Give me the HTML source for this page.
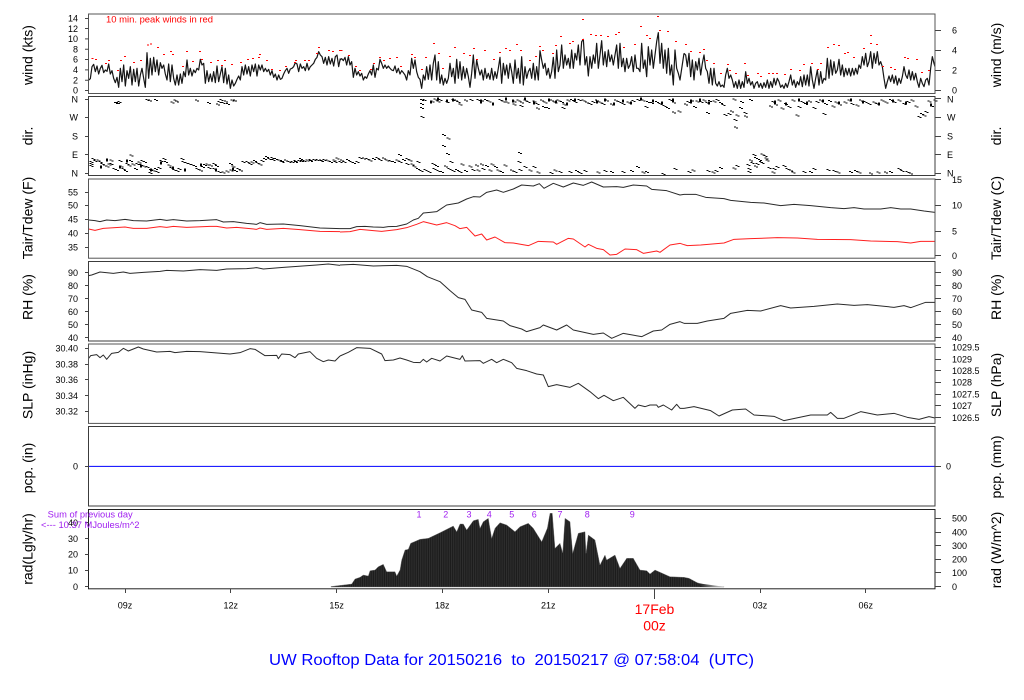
<!DOCTYPE html>
<html>
<head>
<meta charset="utf-8">
<title>UW Rooftop Data</title>
<style>
html,body{margin:0;padding:0;background:#fff;width:1024px;height:700px;overflow:hidden}
svg{display:block}
text{font-family:"Liberation Sans",Arial,sans-serif;white-space:pre}
.t{font-size:9px;fill:#000}
.e{text-anchor:end}
.m{text-anchor:middle}
.a{font-size:14px;fill:#000;text-anchor:middle}
.p{font-size:9px;fill:#a020f0}
</style>
</head>
<body>
<svg xmlns="http://www.w3.org/2000/svg" width="1024" height="700" viewBox="0 0 1024 700">
<defs>
<pattern id="st" width="2.2" height="10" patternUnits="userSpaceOnUse"><rect width="2.2" height="10" fill="#1c1c1c"/><rect width="1" height="10" fill="#303030"/></pattern>
<linearGradient id="fade" x1="0" x2="1" y1="0" y2="0"><stop offset="0" stop-color="#222"/><stop offset="1" stop-color="#ddd"/></linearGradient>
</defs>
<rect width="1024" height="700" fill="#fff"/>

<!-- radiation -->
<path fill="url(#st)" stroke="#777" stroke-width=".4" d="M331 586.5L351.7 584 355 579 360 577.3 363.3 575 368.3 576 370 570.7 375 570 378.3 566.7 383.3 564.3 386.7 571.7 395 571.7 396.7 576 400 570 401.7 560 405 550 408.3 549.3 410.7 543.3 420 539.3 428.3 538.3 440 532.7 453.3 526 456.7 531.7 460 524 463.3 524 466.7 530 473.3 520.7 478.3 519.3 480 528.3 483.3 521.7 488.3 518.3 491.7 538.3 495 528.3 500 522.7 506.7 525 515 531.7 520 526.7 528.3 523.3 533.3 528.3 541.7 541.7 547.3 528.3 550 513.3 552.3 513.3 555 548.3 560 543.3 562.7 552.7 565 518.3 570 521.7 572.7 553.3 575 545 578.3 533.3 585 531.7 586 553.3 588.3 535 595 540 600 565 605 555 606.7 560 615 555 620 568.3 626.7 558.3 633.3 558.3 640 570 646.7 570.7 650 574 655 570 670 576.7 684 577.3 689 578.3 697.3 582.7 707.3 585.7 724 586.7 V587 H331Z"/>
<path fill="url(#fade)" d="M700 583.5L724 586.7V587H700Z"/>

<!-- blue precip -->
<path d="M89 466.4H935" stroke="#0000ff" stroke-width="1" fill="none"/>

<!-- wind -->
<g fill="none" stroke="#151515" stroke-width="3.6" stroke-linejoin="round">
<polyline transform="scale(.33333)" points="266 240 271 236 276 200 281 193 286 215 291 198 296 222 301 205 306 196 311 218 316 210 321 214 326 192 331 222 336 212 341 235 346 248 351 232 356 262 361 205 366 245 371 195 376 258 381 212 386 235 391 200 396 255 401 208 406 245 411 205 416 258 421 225 426 205 431 235 436 262 441 158 446 235 451 175 456 225 461 172 466 215 471 180 476 225 481 188 486 205 491 195 496 222 501 240 506 192 511 245 516 195 521 235 526 255 531 225 536 255 541 222 546 250 551 215 556 230 561 180 566 225 571 205 576 228 581 210 586 218 591 205 596 210 601 178 606 195 611 190 616 250 621 212 626 245 631 222 636 245 641 215 646 248 651 198 656 245 661 222 666 200 671 248 676 205 681 252 686 225 691 265 696 240 701 258 706 250 711 238 716 228 721 240 726 200 731 225 736 195 741 222 746 200 751 228 756 195 761 215 766 192 771 228 776 195 781 210 786 195 791 215 796 205 801 215 806 208 811 225 816 212 821 232 826 222 831 240 836 225 841 238 846 235 851 222 856 212 861 205 866 220 871 207 876 205 881 200 886 188 891 192 896 215 901 192 906 205 911 200 916 212 921 190 926 210 931 200 936 195 941 190 946 178 951 172 956 155 961 165 966 170 971 190 976 172 981 195 986 170 991 192 996 175 1001 198 1006 170 1011 165 1016 200 1021 175"/>
<polyline transform="translate(340 0) scale(.33333)" points="0 180 5 176 10 182 15 172 20 195 25 170 30 195 35 185 40 232 45 205 50 225 55 215 60 228 65 220 70 240 75 230 80 235 85 222 90 212 95 225 100 195 105 232 110 205 115 210 120 178 125 190 130 205 135 195 140 205 145 198 150 205 155 210 160 212 165 198 170 218 175 205 180 222 185 212 190 218 195 225 200 240 205 212 210 225 215 175 220 205 225 180 230 215 235 232 240 238 245 265 250 225 255 240 260 200 265 238 270 195 275 240 280 190 285 165 290 240 295 185 300 250 305 225 310 255 315 235 320 250 325 235 330 190 335 230 340 205 345 250 350 178 355 235 360 185 365 240 370 200 375 235 380 205 385 230 390 262 395 220 400 165 405 235 410 180 415 205 420 225 425 210 430 240 435 205 440 235 445 220 450 238 455 205 460 240 465 215 470 235 475 205 480 172 485 250 490 190 495 225 500 195 505 235 510 190 515 215 520 250 525 180 530 235 535 205 540 250 545 170 550 255 555 200 560 235 565 215 570 205 575 235 580 190 585 240 590 200 595 240 600 152 605 180 610 205 615 190 620 225 625 205 630 235 635 215 640 172 645 235 650 150 655 215 660 195 665 135 670 205 675 165 680 195 685 175 690 205 695 150 700 205 705 160 710 180 715 135 720 195 725 125 730 118 735 195 740 170 745 228 750 170 755 205 760 165 765 190 770 130 775 205 780 165 785 122 790 195 795 155 800 200 805 150 810 185 815 165 820 195 825 165 830 135 835 205 840 130 845 200 850 175 855 215 860 175 865 205 870 195 875 170 880 215 885 165 890 205 895 205 900 215 905 130 910 205 915 180 920 230 925 140 930 195 935 150 940 205 945 165 950 125 955 98 960 190 965 130 970 205 975 150 980 220 985 145 990 225 995 195 1000 255 1005 150 1010 205 1015 220 1020 240 1032 160"/>
<polyline transform="translate(684 0) scale(.33333)" points="0 160 5 165 10 200 15 160 20 230 25 180 30 240 35 185 40 210 45 175 50 225 55 190 60 165 65 205 70 215 75 250 80 205 85 255 90 205 95 250 100 258 105 245 110 260 115 255 120 262 125 225 130 205 135 235 140 225 145 240 150 262 155 245 160 265 165 240 170 265 175 245 180 262 185 215 190 250 195 235 200 255 205 245 210 265 215 250 220 245 225 262 230 250 235 265 240 248 245 262 250 240 255 265 260 245 265 262 270 235 275 255 280 235 285 245 290 262 295 255 300 265 305 250 310 262 315 245 320 225 325 255 330 240 335 262 340 245 345 255 350 230 355 260 360 225 365 255 370 225 375 258 380 200 385 240 390 265 395 235 400 210 405 255 410 215 415 250 420 235 425 240 430 175 435 235 440 180 445 225 450 185 455 220 460 210 465 178 470 225 475 195 480 230 485 205 490 225 495 205 500 228 505 205 510 225 515 205 520 222 525 195 530 205 535 170 540 195 545 160 550 200 555 185 560 155 565 205 570 160 575 190 580 155 585 195 590 185 595 200 600 235 605 265 610 245 615 228 620 245 625 225 630 250 635 228 640 255 645 235 650 250 655 230 660 200 665 225 670 235 675 210 680 240 685 215 690 240 695 220 700 245 705 262 710 235 715 250 720 260 725 240 730 235 735 255 740 205 745 170 750 190 753 200"/>
</g>

<!-- peak winds -->
<g fill="none" stroke="#ff0000" stroke-width="3" shape-rendering="crispEdges">
<path transform="scale(.33333)" d="M275 175h6M285 178h6M315 190h6M324 181h6M351 211h6M360 181h6M372 169h6M399 187h6M420 181h6M441 135h6M450 132h6M471 142h6M489 163h6M510 154h6M516 163h6M546 199h6M558 154h6M576 184h6M597 154h6M603 178h6M630 187h6M651 181h6M672 181h6M663 196h6M693 193h6M720 187h6M741 178h6M756 175h6M774 172h6M777 163h6M798 181h6M813 208h6M837 211h6M855 199h6M885 181h6M882 187h6M912 181h6M924 181h6M948 160h6M954 142h6M984 151h6M996 154h6M1017 151h6"/>
<path transform="translate(340 0) scale(.33333)" d="M2 151h6M24 166h6M45 199h6M57 211h6M90 208h6M99 190h6M117 172h6M129 181h6M147 175h6M168 172h6M180 199h6M213 163h6M222 172h6M243 208h6M255 172h6M279 130h6M294 160h6M306 205h6M327 169h6M342 142h6M369 160h6M387 166h6M399 145h6M408 178h6M432 151h6M459 178h6M477 157h6M495 145h6M507 151h6M528 133h6M540 151h6M567 181h6M585 169h6M597 139h6M606 151h6M636 160h6M645 136h6M660 109h6M687 130h6M696 124h6M726 58h6M726 118h6M750 103h6M765 106h6M780 106h6M801 109h6M825 103h6M834 97h6M849 142h6M882 133h6M900 79h6M918 106h6M927 115h6M951 49h6M957 91h6M981 94h6M1005 124h6"/>
<path transform="translate(684 0) scale(.33333)" d="M3 133h6M18 154h6M45 157h6M57 148h6M66 181h6M87 190h6M108 220h6M129 193h6M135 211h6M153 220h6M180 190h6M189 226h6M219 220h6M228 229h6M252 220h6M264 220h6M276 220h6M300 223h6M318 208h6M345 211h6M357 193h6M381 190h6M399 208h6M408 190h6M429 142h6M447 133h6M462 136h6M480 160h6M489 157h6M507 172h6M537 145h6M558 106h6M558 130h6M576 133h6M594 199h6M618 202h6M630 208h6M660 172h6M669 175h6M696 178h6M711 217h6M732 211h6"/>
</g>

<!-- direction -->
<g fill="none" stroke="#000" stroke-width="3" shape-rendering="crispEdges">
<path id="d1" transform="scale(.33333)" d="M342 308h6M348 308h6M352 305h6M436 298h6M444 300h6M462 299h6M512 306h6M520 300h6M525 303h6M585 300h6M621 308h6M648 312h6M652 305h6M658 299h6M665 308h6M678 311h6M672 303h6M692 300h6M699 300h6M268 484h6M268 490h6M268 497h6M275 476h6M281 482h6M290 480h6M295 485h6M302 490h6M309 495h6M317 498h6M322 492h6M329 480h6M329 490h6M337 505h6M345 508h6M355 482h6M359 498h6M365 505h6M372 512h6M377 490h6M382 495h6M389 465h6M387 482h6M395 492h6M402 506h6M407 490h6M413 486h6M421 482h6M429 484h6M417 494h6M427 498h6M437 500h6M447 508h6M445 518h6M455 510h6M462 505h6M472 502h6M467 515h6M479 482h6M487 476h6M492 485h6M502 495h6M509 502h6M517 508h6M527 512h6M533 505h6M541 476h6M545 484h6M553 488h6M562 490h6M571 493h6M579 497h6M587 506h6M597 510h6M603 500h6M609 494h6M617 492h6M627 495h6M637 490h6M645 497h6M637 505h6M622 503h6M652 515h6M665 516h6M677 513h6M687 490h6M695 498h6M689 510h6M702 512h6M709 505h6M717 510h6M725 484h6M737 484h6M745 490h6M752 486h6M759 482h6M767 488h6M775 492h6M782 482h6M789 476h6M795 470h6M802 476h6M812 473h6M822 476h6M832 480h6M842 484h6M852 480h6M862 484h6M872 484h6M882 485h6M892 482h6M897 476h6M907 482h6M917 480h6M927 482h6M937 478h6M947 478h6M957 480h6M967 478h6M977 480h6M987 484h6M997 480h6M1007 474h6M1015 484h6M815 478h6M840 482h6M880 482h6M900 482h6M925 478h6M960 482h6M1000 484h6"/>
<path id="d2" transform="translate(340 0) scale(.33333)" d="M0 480h6M8 484h6M18 478h6M28 484h6M36 488h6M46 484h6M56 472h6M66 474h6M76 476h6M86 480h6M96 476h6M106 472h6M116 478h6M126 474h6M136 480h6M146 482h6M156 484h6M166 480h6M174 463h6M176 484h6M186 478h6M196 476h6M206 480h6M196 490h6M212 492h6M230 484h6M218 498h6M228 505h6M238 512h6M250 508h6M262 515h6M275 490h6M285 496h6M278 505h6M290 512h6M300 515h6M312 498h6M322 505h6M335 512h6M345 508h6M362 492h6M355 515h6M372 512h6M385 498h6M395 508h6M405 495h6M410 510h6M420 492h6M425 505h6M435 496h6M445 510h6M452 492h6M462 500h6M470 510h6M480 515h6M490 495h6M510 510h6M520 515h6M535 508h6M550 500h6M565 510h6M578 500h6M590 516h6M628 518h6M640 510h6M655 515h6M685 515h6M705 512h6M715 518h6M730 512h6M770 516h6M790 512h6M810 515h6M845 515h6M870 512h6M888 500h6M905 516h6M915 515h6M965 520h6M1000 505h6M240 298h6M240 310h6M240 322h6M242 349h6M248 298h6M272 303h6M280 297h6M290 303h6M296 298h6M316 304h6M335 298h6M342 300h6M350 304h6M355 312h6M372 300h6M388 298h6M410 298h6M420 300h6M432 298h6M442 303h6M475 298h6M484 303h6M496 306h6M518 303h6M518 312h6M530 300h6M540 306h6M538 316h6M550 300h6M560 304h6M578 303h6M586 310h6M588 324h6M600 300h6M610 306h6M606 320h6M618 323h6M630 300h6M640 306h6M650 300h6M660 304h6M668 312h6M664 322h6M680 300h6M690 298h6M700 304h6M712 298h6M725 300h6M735 306h6M745 310h6M755 304h6M765 300h6M775 306h6M785 310h6M795 300h6M810 312h6M822 300h6M832 305h6M845 310h6M860 306h6M875 302h6M890 298h6M905 300h6M918 304h6M914 319h6M930 308h6M945 304h6M955 310h6M968 316h6M978 322h6M985 298h6M996 306h6M996 336h6M1012 333h6M306 403h6M320 414h6M306 436h6M318 460h6M534 457h6M532 484h6M328 484h6"/>
<path id="d3" transform="translate(684 0) scale(.33333)" d="M0 312h6M8 305h6M18 300h6M27 320h6M35 303h6M46 305h6M55 300h6M64 308h6M72 302h6M66 337h6M85 303h6M95 298h6M105 308h6M113 314h6M118 343h6M130 340h6M138 333h6M145 297h6M148 358h6M150 381h6M155 345h6M165 322h6M168 305h6M178 338h6M180 348h6M195 298h6M255 318h6M262 304h6M270 312h6M280 300h6M290 324h6M300 310h6M310 320h6M322 300h6M335 345h6M340 320h6M350 304h6M360 310h6M372 303h6M385 322h6M395 305h6M405 300h6M415 340h6M420 310h6M432 302h6M442 318h6M452 306h6M462 312h6M478 306h6M490 300h6M500 310h6M515 315h6M525 300h6M538 305h6M550 310h6M565 306h6M575 310h6M590 300h6M602 306h6M615 298h6M625 304h6M640 300h6M655 310h6M668 304h6M680 300h6M692 318h6M700 350h6M708 340h6M716 345h6M722 335h6M730 303h6M738 316h6M748 300h6M10 515h6M22 510h6M68 512h6M82 516h6M92 512h6M105 503h6M145 504h6M155 497h6M190 515h6M187 493h6M195 480h6M205 463h6M210 472h6M200 488h6M215 490h6M222 478h6M230 462h6M238 466h6M245 480h6M230 488h6M250 503h6M265 505h6M262 516h6M275 500h6M295 497h6M305 505h6M315 510h6M322 516h6M355 515h6M375 514h6M385 506h6M428 508h6M445 512h6M458 516h6M495 515h6M510 512h6M520 516h6M555 519h6M578 516h6M600 516h6M615 514h6M640 505h6M650 512h6M665 515h6M675 519h6M190 505h6M210 498h6M225 485h6M242 474h6"/>
<use href="#d1" x="2" y="1"/>
<use href="#d2" x="2" y="1"/>
<use href="#d3" x="2" y="1"/>
<path d="M100 167h2M106 160h2M119 167h2M126 161h2M140 166h2M150 170h2M160 163h2M172 168h2M184 170h2M200 165h2M215 170h2M232 169h2M430 102h2M437 99h2M446 101h2M452 100h2M480 102h2M492 104h2M505 99h2M512 101h2M524 99h2M533 103h2M548 100h2M555 102h2M566 104h2M574 100h2M596 102h2M604 100h2M613 104h2M622 101h2M630 103h2M640 99h2M652 101h2M661 103h2M672 100h2M690 102h2M699 100h2M708 103h2M774 102h2M785 104h2M798 100h2M806 103h2M822 101h2M838 103h2M850 100h2M862 102h2M878 104h2M892 101h2M905 103h2M930 105h2"/>
</g>

<!-- temperature, RH, SLP lines -->
<g fill="none" stroke-width="3" stroke-linejoin="round">
<g stroke="#2a2a2a">
<polyline transform="translate(0 175) scale(.33333)" points="266 135 285 137 300 140 320 135 345 137 375 133 400 137 440 138 480 133 500 136 520 134 560 138 600 137 650 134 670 141 700 140 740 145 770 148 780 143 800 148 850 147 900 152 960 159 1020 161"/>
<polyline transform="translate(340 175) scale(.33333)" points="0 161 30 161 50 155 75 154 100 156 130 157 145 155 170 154 200 147 220 135 235 130 250 114 270 112 290 110 305 100 320 90 355 84 380 72 400 65 420 66 440 52 470 45 490 52 520 42 545 30 580 33 598 26 612 40 640 25 670 36 700 24 730 31 755 21 790 36 830 35 850 37 880 30 920 33 935 43 980 47 1020 60 1032 58"/>
<polyline transform="translate(684 175) scale(.33333)" points="0 58 35 58 65 67 120 71 140 76 200 82 240 84 290 92 330 88 380 92 440 98 480 101 510 98 540 102 590 102 620 98 650 102 680 102 720 108 753 112"/>
<polyline transform="translate(0 175) scale(.33333)" points="266 302 275 300 300 291 340 295 370 291 390 295 430 292 480 289 500 286 550 288 600 284 650 286 680 282 740 281 770 278 790 282 850 277 950 270 985 267 1020 271"/>
<polyline transform="translate(340 175) scale(.33333)" points="0 270 40 268 100 273 170 271 200 274 240 290 262 305 300 320 330 347 355 368 375 373 395 405 425 412 440 430 490 438 510 452 545 462 560 470 600 458 610 450 650 465 680 450 700 465 760 478 790 474 815 490 850 475 905 485 940 468 965 465 990 448 1020 440 1032 445"/>
<polyline transform="translate(684 175) scale(.33333)" points="0 445 40 445 70 438 120 430 140 415 190 406 230 408 290 392 320 399 390 394 460 387 510 391 550 389 630 397 660 392 680 398 725 382 753 382"/>
<polyline transform="translate(0 340) scale(.33333)" points="266 55 272 47 290 44 300 53 310 45 320 58 335 40 355 37 370 25 385 33 415 21 430 27 470 36 510 34 525 38 560 34 600 35 690 42 720 38 750 26 765 28 795 47 830 46 835 56 845 42 870 44 885 53 895 42 930 35 950 55 970 65 985 60 1005 63 1020 48"/>
<polyline transform="translate(340 340) scale(.33333)" points="0 48 25 37 50 23 90 25 125 42 135 62 160 60 180 54 200 60 220 67 240 68 250 58 260 66 275 55 300 63 320 48 360 58 367 47 375 63 420 62 430 70 455 58 470 68 490 58 515 68 530 85 560 92 590 102 610 105 625 140 650 134 690 142 715 130 750 155 775 176 792 166 820 182 850 172 885 205 895 195 915 200 930 195 950 195 955 202 970 195 995 210 1010 193 1020 205 1032 205"/>
<polyline transform="translate(684 340) scale(.33333)" points="0 205 30 200 80 212 105 228 145 210 185 207 210 225 270 229 300 242 380 225 430 225 440 217 460 235 480 235 530 215 580 225 630 220 670 232 705 238 735 230 753 234"/>
</g>
<g stroke="#ff2020">
<polyline transform="translate(0 175) scale(.33333)" points="266 162 285 166 310 160 375 156 400 160 440 160 480 155 500 157 520 154 560 157 630 154 650 154 680 159 710 157 750 161 770 163 780 159 800 163 850 160 900 164 960 169 1020 170"/>
<polyline transform="translate(340 175) scale(.33333)" points="0 171 30 170 60 163 100 167 125 169 170 164 200 158 230 148 250 140 290 150 320 143 345 152 360 161 380 157 405 183 425 177 440 195 465 186 495 203 520 204 565 212 595 199 640 201 650 208 685 190 700 192 735 216 745 208 770 220 790 224 810 240 830 238 855 222 890 224 910 235 950 228 960 232 990 210 1020 205 1032 209"/>
<polyline transform="translate(684 175) scale(.33333)" points="0 209 10 212 50 210 120 204 150 193 200 191 280 188 340 189 400 193 500 194 560 198 640 200 680 204 710 199 753 199"/>
</g>
</g>

<!-- panels -->
<g fill="none" stroke="#3c3c3c" stroke-width="1">
<rect x="88.5" y="14" width="846.5" height="79.5" stroke="#555"/>
<rect x="88.5" y="96.5" width="846.5" height="79"/>
<rect x="88.5" y="179" width="846.5" height="79.2" stroke="#555"/>
<rect x="88.5" y="261.5" width="846.5" height="79.5"/>
<rect x="88.5" y="344" width="846.5" height="79.4" stroke="#555"/>
<rect x="88.5" y="426.5" width="846.5" height="79.5"/>
<rect x="88.5" y="509.5" width="846.5" height="79.3" stroke="#222"/>
</g>

<!-- ticks -->
<path fill="none" stroke="#444" stroke-width="1" d="
M85 90.5H88.5M85 80.2H88.5M85 69.9H88.5M85 59.5H88.5M85 49.2H88.5M85 38.9H88.5M85 28.5H88.5M85 18.5H88.5
M85 99.5H88.5M85 117.5H88.5M85 136.5H88.5M85 154.5H88.5M85 173.5H88.5
M85 192.5H88.5M85 205.5H88.5M85 219.5H88.5M85 233.5H88.5M85 247.5H88.5
M85 272.5H88.5M85 285.5H88.5M85 298.5H88.5M85 311.5H88.5M85 324.5H88.5M85 337.5H88.5
M85 348.5H88.5M85 364.5H88.5M85 379.5H88.5M85 395.5H88.5M85 411.5H88.5
M85 466.5H88.5
M85 522.5H88.5M85 538.5H88.5M85 554.5H88.5M85 570.5H88.5M85 586.5H88.5
M935 30.5H941M935 50.5H941M935 70.5H941M935 90.5H941
M935 98.5H941M935 117.5H941M935 136.5H941M935 154.5H941M935 173.5H941
M935 179.5H941M935 205.5H941M935 231.5H941M935 255.5H941
M935 272.5H941M935 285.5H941M935 298.5H941M935 311.5H941M935 324.5H941M935 337.5H941
M935 347.5H941M935 359.5H941M935 370.5H941M935 382.5H941M935 394.5H941M935 405.5H941M935 417.5H941
M935 466.5H941
M935 518.5H941M935 532.5H941M935 545.5H941M935 559.5H941M935 572.5H941M935 586.5H941
M125.5 589V593M230.5 589V593M336.5 589V593M442.5 589V593M548.5 589V593M654.5 589V599M760.5 589V593M865.5 589V593"/>

<!-- left tick labels -->
<g>
<text class="t e" x="78" y="21.5">14</text><text class="t e" x="78" y="31.8">12</text><text class="t e" x="78" y="42">10</text><text class="t e" x="78" y="52.4">8</text><text class="t e" x="78" y="62.7">6</text><text class="t e" x="78" y="73">4</text><text class="t e" x="78" y="83.4">2</text><text class="t e" x="78" y="93.7">0</text>
<text class="t e" x="78" y="102.6">N</text><text class="t e" x="78" y="120.6">W</text><text class="t e" x="78" y="139.3">S</text><text class="t e" x="78" y="158">E</text><text class="t e" x="78" y="176.6">N</text>
<text class="t e" x="78" y="195.3">55</text><text class="t e" x="78" y="208.6">50</text><text class="t e" x="78" y="222.6">45</text><text class="t e" x="78" y="236.6">40</text><text class="t e" x="78" y="250.6">35</text>
<text class="t e" x="78" y="276">90</text><text class="t e" x="78" y="289">80</text><text class="t e" x="78" y="302">70</text><text class="t e" x="78" y="315">60</text><text class="t e" x="78" y="328">50</text><text class="t e" x="78" y="341">40</text>
<text class="t e" x="78" y="351.6">30.40</text><text class="t e" x="78" y="367.3">30.38</text><text class="t e" x="78" y="383">30.36</text><text class="t e" x="78" y="399">30.34</text><text class="t e" x="78" y="414.6">30.32</text>
<text class="t e" x="78" y="469.6">0</text>
<text class="t e" x="78" y="526">40</text><text class="t e" x="78" y="542">30</text><text class="t e" x="78" y="557.6">20</text><text class="t e" x="78" y="573.6">10</text><text class="t e" x="78" y="590">0</text>
</g>

<!-- right tick labels -->
<g>
<text class="t" x="952" y="33.3">6</text><text class="t" x="952" y="53.3">4</text><text class="t" x="952" y="73.6">2</text><text class="t" x="952" y="93.6">0</text>
<text class="t" x="947" y="102.6">N</text><text class="t" x="947" y="120.6">W</text><text class="t" x="947" y="139.3">S</text><text class="t" x="947" y="158">E</text><text class="t" x="947" y="176.6">N</text>
<text class="t" x="952" y="183">15</text><text class="t" x="952" y="208.6">10</text><text class="t" x="952" y="234.3">5</text><text class="t" x="952" y="259">0</text>
<text class="t" x="952" y="276">90</text><text class="t" x="952" y="289">80</text><text class="t" x="952" y="302">70</text><text class="t" x="952" y="315">60</text><text class="t" x="952" y="328">50</text><text class="t" x="952" y="341">40</text>
<text class="t" x="952" y="350.6">1029.5</text><text class="t" x="952" y="362.3">1029</text><text class="t" x="952" y="374">1028.5</text><text class="t" x="952" y="385.6">1028</text><text class="t" x="952" y="397.3">1027.5</text><text class="t" x="952" y="409">1027</text><text class="t" x="952" y="421">1026.5</text>
<text class="t" x="946" y="469.6">0</text>
<text class="t" x="952" y="521.6">500</text><text class="t" x="952" y="535.3">400</text><text class="t" x="952" y="549">300</text><text class="t" x="952" y="562.6">200</text><text class="t" x="952" y="576">100</text><text class="t" x="952" y="590">0</text>
</g>

<!-- axis titles -->
<text class="a" transform="translate(32.5 55) rotate(-90)">wind (kts)</text>
<text class="a" transform="translate(32.5 136) rotate(-90)">dir.</text>
<text class="a" transform="translate(32.5 218) rotate(-90)">Tair/Tdew (F)</text>
<text class="a" transform="translate(32.5 297) rotate(-90)">RH (%)</text>
<text class="a" transform="translate(32.5 385) rotate(-90)">SLP (inHg)</text>
<text class="a" transform="translate(32.5 468) rotate(-90)">pcp. (in)</text>
<text class="a" transform="translate(32.5 549) rotate(-90)">rad(Lgly/hr)</text>
<text class="a" transform="translate(1001 55) rotate(-90)">wind (m/s)</text>
<text class="a" transform="translate(1001 136) rotate(-90)">dir.</text>
<text class="a" transform="translate(1001 218) rotate(-90)">Tair/Tdew (C)</text>
<text class="a" transform="translate(1001 297) rotate(-90)">RH (%)</text>
<text class="a" transform="translate(1001 385) rotate(-90)">SLP (hPa)</text>
<text class="a" transform="translate(1001 467) rotate(-90)">pcp. (mm)</text>
<text class="a" transform="translate(1001 550) rotate(-90)">rad (W/m^2)</text>

<!-- annotations -->
<text x="106" y="22.7" font-size="9" fill="#ff0000" textLength="107" lengthAdjust="spacingAndGlyphs">10 min. peak winds in red</text>
<text class="p" x="47.7" y="517.7" textLength="85" lengthAdjust="spacingAndGlyphs">Sum of previous day</text>
<text class="p" x="41" y="528" textLength="98.5" lengthAdjust="spacingAndGlyphs">&lt;--- 10.37 MJoules/m^2</text>
<g>
<text class="p m" x="419" y="517.3">1</text><text class="p m" x="445.7" y="517.3">2</text><text class="p m" x="469" y="517.3">3</text><text class="p m" x="489.3" y="517.3">4</text><text class="p m" x="511.7" y="517.3">5</text><text class="p m" x="534.3" y="517.3">6</text><text class="p m" x="560" y="517.3">7</text><text class="p m" x="587.3" y="517.3">8</text><text class="p m" x="632.3" y="517.3">9</text>
</g>

<!-- x labels -->
<text class="t m" x="125" y="608.7">09z</text><text class="t m" x="230.7" y="608.7">12z</text><text class="t m" x="336.6" y="608.7">15z</text><text class="t m" x="442.3" y="608.7">18z</text><text class="t m" x="548.3" y="608.7">21z</text><text class="t m" x="760" y="608.7">03z</text><text class="t m" x="865.7" y="608.7">06z</text>
<text class="m" x="654.5" y="614" font-size="14" fill="#ff0000">17Feb</text>
<text class="m" x="654.5" y="630.7" font-size="14" fill="#ff0000">00z</text>

<text x="269" y="665" font-size="16" fill="#0000ff" textLength="485" lengthAdjust="spacingAndGlyphs">UW Rooftop Data for 20150216  to  20150217 @ 07:58:04  (UTC)</text>
</svg>
</body>
</html>
